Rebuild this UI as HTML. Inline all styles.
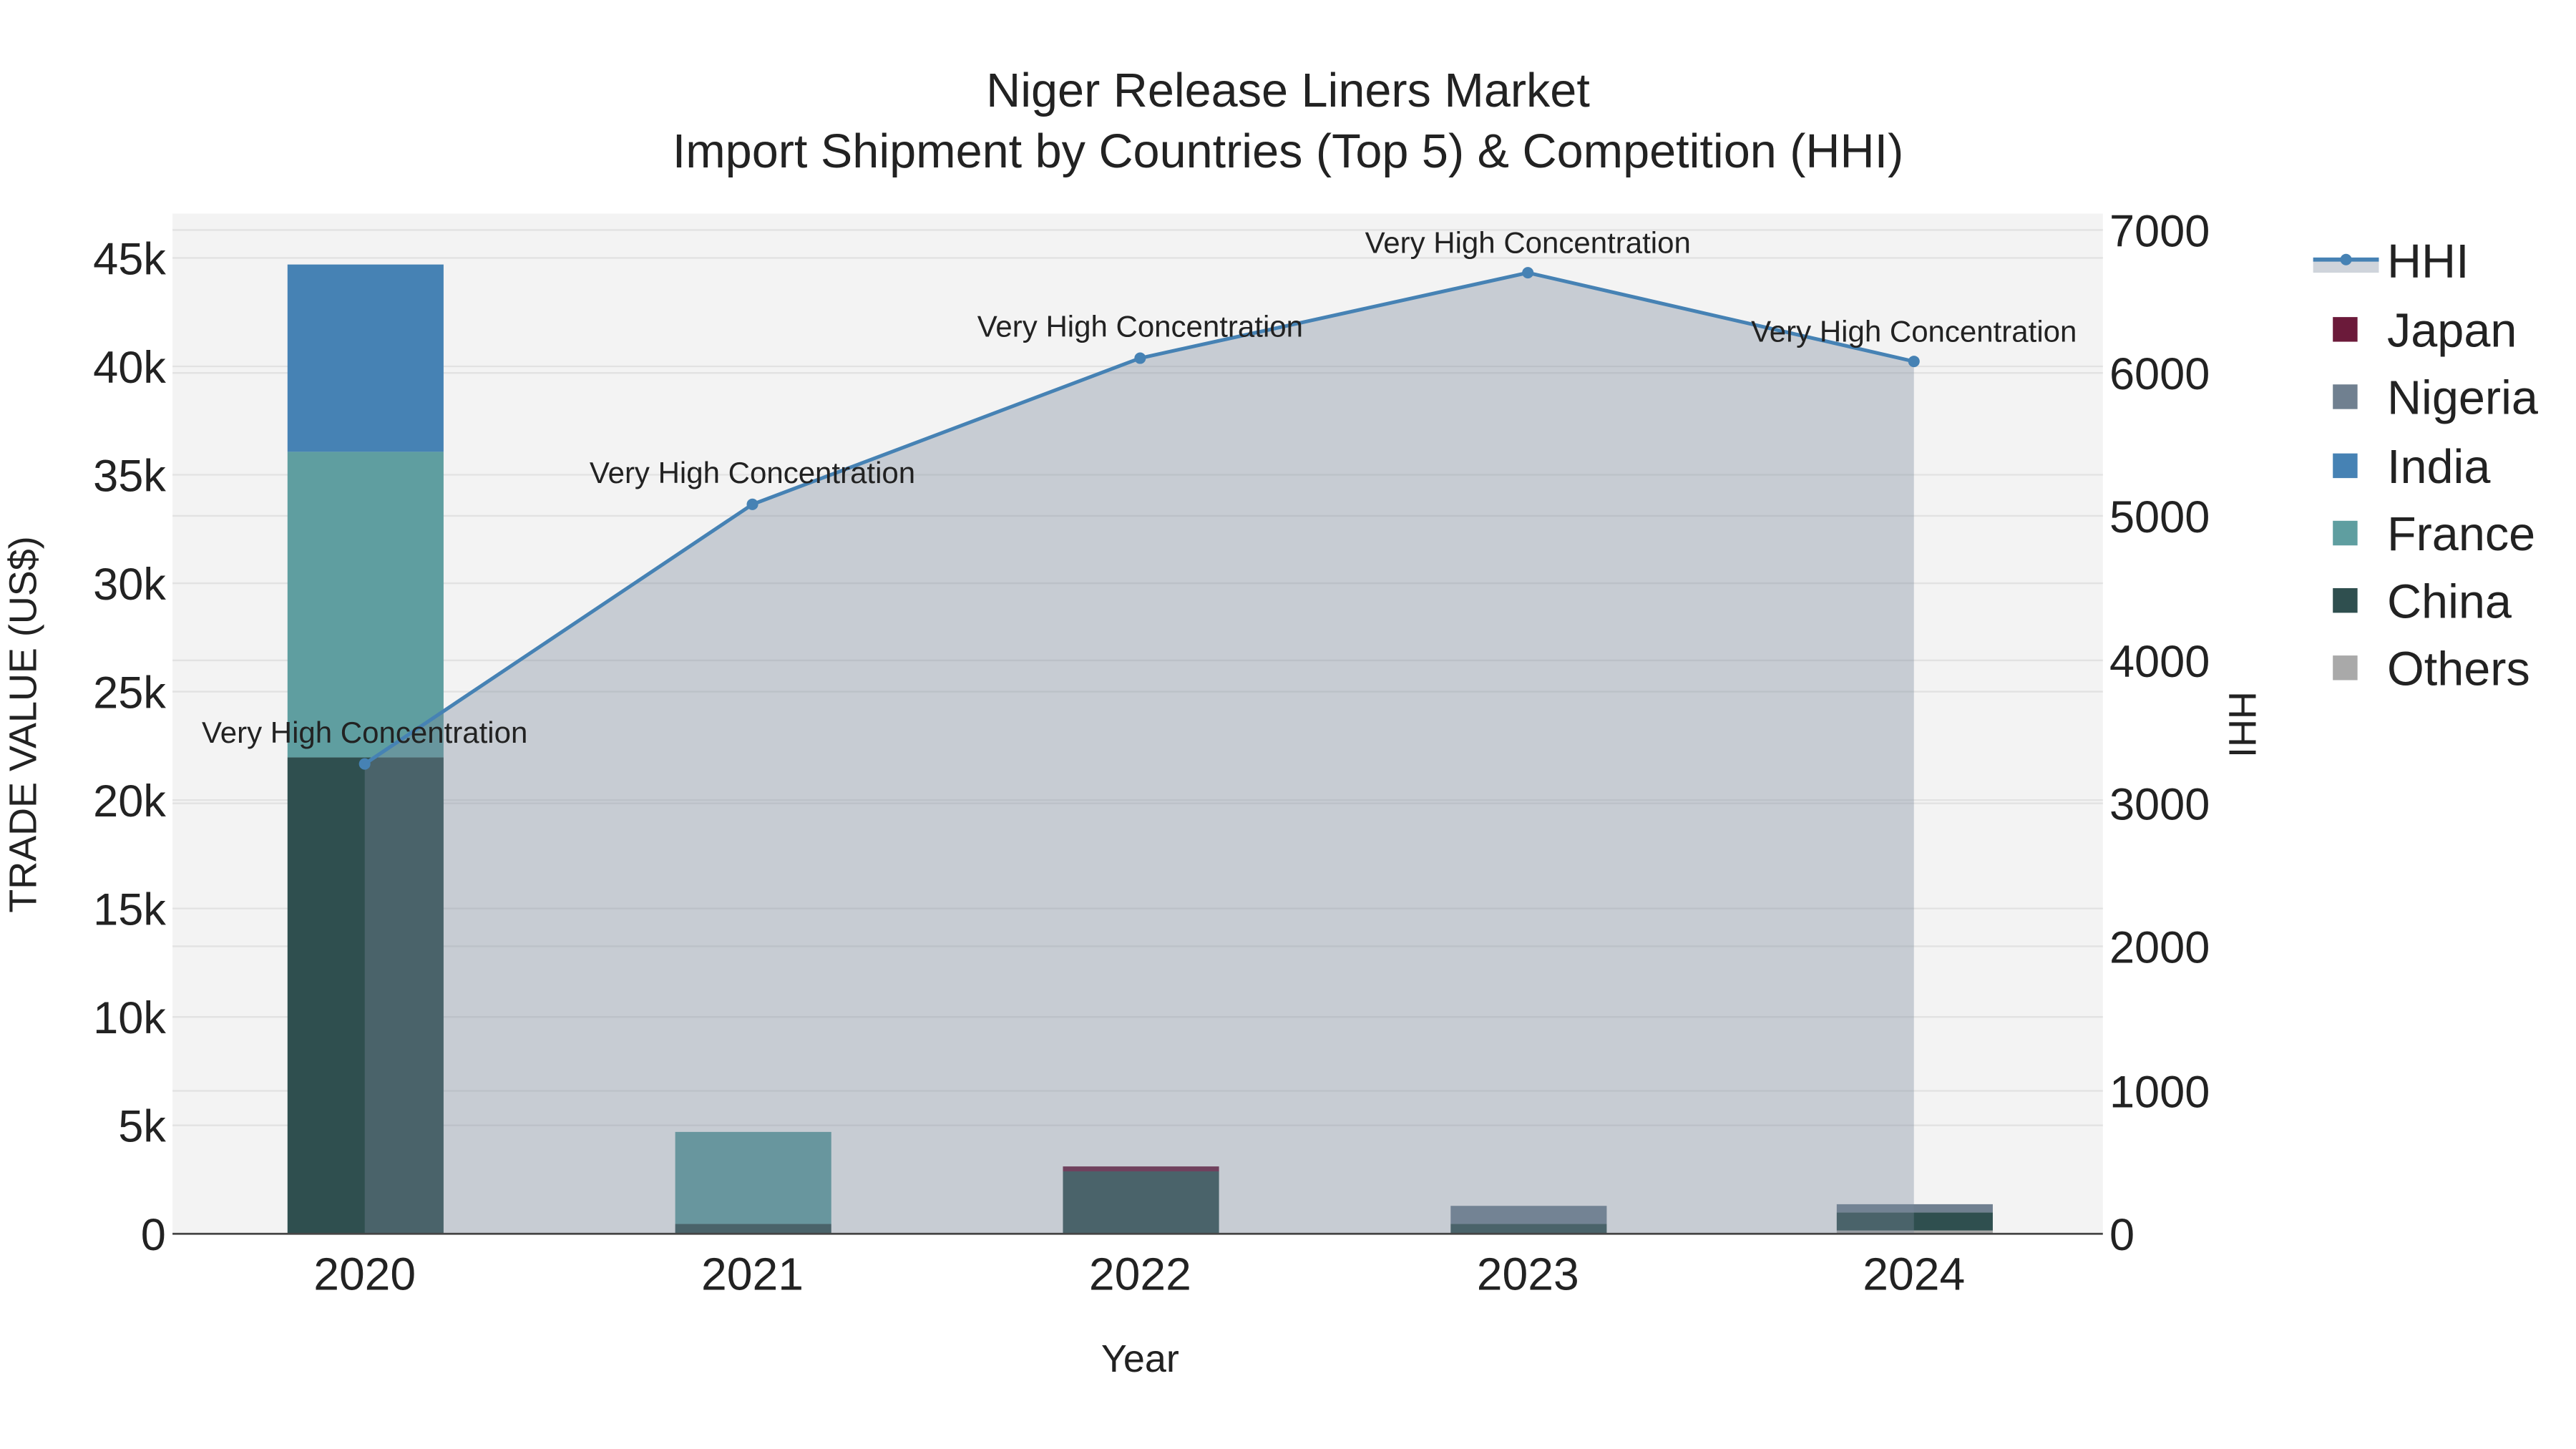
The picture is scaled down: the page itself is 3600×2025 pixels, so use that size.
<!DOCTYPE html>
<html><head><meta charset="utf-8"><style>
html,body{margin:0;padding:0;background:#fff;}
svg{display:block;}
text{font-family:"Liberation Sans",Arial,sans-serif;fill:#222;}
</style></head><body>
<svg width="3600" height="2025" viewBox="0 0 1568 882" preserveAspectRatio="none" xmlns="http://www.w3.org/2000/svg">
<rect x="0" y="0" width="1568" height="882" fill="#fff"/>
<rect x="105" y="130" width="1175" height="621" fill="#f3f3f3"/>
<g stroke="#e2e2e2" stroke-width="1">
<line x1="105" x2="1280" y1="685" y2="685"/><line x1="105" x2="1280" y1="619" y2="619"/>
<line x1="105" x2="1280" y1="553" y2="553"/><line x1="105" x2="1280" y1="487" y2="487"/>
<line x1="105" x2="1280" y1="421" y2="421"/><line x1="105" x2="1280" y1="355" y2="355"/>
<line x1="105" x2="1280" y1="289" y2="289"/><line x1="105" x2="1280" y1="223" y2="223"/>
<line x1="105" x2="1280" y1="157" y2="157"/>
<line x1="105" x2="1280" y1="664" y2="664"/><line x1="105" x2="1280" y1="576" y2="576"/>
<line x1="105" x2="1280" y1="489" y2="489"/><line x1="105" x2="1280" y1="402" y2="402"/>
<line x1="105" x2="1280" y1="314" y2="314"/><line x1="105" x2="1280" y1="227" y2="227"/>
<line x1="105" x2="1280" y1="140" y2="140"/>
</g>
<g>
<rect x="175" y="461" width="95" height="290" fill="#2F4F4F"/>
<rect x="175" y="275" width="95" height="186" fill="#5F9EA0"/>
<rect x="175" y="161" width="95" height="114" fill="#4682B4"/>
<rect x="411" y="745" width="95" height="6" fill="#2F4F4F"/>
<rect x="411" y="689" width="95" height="56" fill="#5F9EA0"/>
<rect x="647" y="713" width="95" height="38" fill="#2F4F4F"/>
<rect x="647" y="710" width="95" height="3" fill="#6B1A3A"/>
<rect x="883" y="745" width="95" height="6" fill="#2F4F4F"/>
<rect x="883" y="734" width="95" height="11" fill="#708090"/>
<rect x="1118" y="749" width="95" height="2" fill="#A9A9A9"/>
<rect x="1118" y="738" width="95" height="11" fill="#2F4F4F"/>
<rect x="1118" y="733" width="95" height="5" fill="#708090"/>
</g>
<polygon points="222,465 458,307 694,218 930,166 1165,220 1165,751 222,751" fill="rgba(123,137,156,0.36)"/>
<polyline points="222,465 458,307 694,218 930,166 1165,220" fill="none" stroke="#4682B4" stroke-width="2.2"/>
<g fill="#4682B4"><circle cx="222" cy="465" r="3.5"/><circle cx="458" cy="307" r="3.5"/><circle cx="694" cy="218" r="3.5"/><circle cx="930" cy="166" r="3.5"/><circle cx="1165" cy="220" r="3.5"/></g>
<line x1="105" x2="1280" y1="751" y2="751" stroke="#444" stroke-width="1.2"/>
<g font-size="18.3" text-anchor="middle">
<text x="222" y="452">Very High Concentration</text>
<text x="458" y="294">Very High Concentration</text>
<text x="694" y="205">Very High Concentration</text>
<text x="930" y="154">Very High Concentration</text>
<text x="1165" y="208">Very High Concentration</text>
</g>
<g font-size="27.5" text-anchor="end">
<text x="101" y="761">0</text><text x="101" y="695">5k</text><text x="101" y="629">10k</text>
<text x="101" y="563">15k</text><text x="101" y="497">20k</text><text x="101" y="431">25k</text>
<text x="101" y="365">30k</text><text x="101" y="299">35k</text><text x="101" y="233">40k</text>
<text x="101" y="167">45k</text>
</g>
<g font-size="27.5" text-anchor="start">
<text x="1284" y="761">0</text><text x="1284" y="674">1000</text><text x="1284" y="586">2000</text>
<text x="1284" y="499">3000</text><text x="1284" y="412">4000</text><text x="1284" y="324">5000</text>
<text x="1284" y="237">6000</text><text x="1284" y="150">7000</text>
</g>
<g font-size="28" text-anchor="middle">
<text x="222" y="785">2020</text><text x="458" y="785">2021</text><text x="694" y="785">2022</text>
<text x="930" y="785">2023</text><text x="1165" y="785">2024</text>
</g>
<text x="694" y="835" font-size="23.5" text-anchor="middle">Year</text>
<text transform="translate(22,441) rotate(-90)" font-size="23.5" text-anchor="middle">TRADE VALUE (US$)</text>
<text transform="translate(1357,441) rotate(90)" font-size="23.5" text-anchor="middle">HHI</text>
<text x="784" y="65" font-size="29" text-anchor="middle">Niger Release Liners Market</text>
<text x="784" y="102" font-size="29" text-anchor="middle">Import Shipment by Countries (Top 5) &amp; Competition (HHI)</text>
<rect x="1408" y="158" width="40" height="8" fill="rgba(123,137,156,0.36)"/>
<line x1="1408" x2="1448" y1="158" y2="158" stroke="#4682B4" stroke-width="2.5"/>
<circle cx="1428" cy="158" r="3.5" fill="#4682B4"/>
<g>
<rect x="1420" y="193" width="15" height="15" fill="#6B1A3A"/>
<rect x="1420" y="234" width="15" height="15" fill="#708090"/>
<rect x="1420" y="276" width="15" height="15" fill="#4682B4"/>
<rect x="1420" y="317" width="15" height="15" fill="#5F9EA0"/>
<rect x="1420" y="358" width="15" height="15" fill="#2F4F4F"/>
<rect x="1420" y="399" width="15" height="15" fill="#A9A9A9"/>
</g>
<g font-size="29">
<text x="1453" y="169">HHI</text><text x="1453" y="211">Japan</text><text x="1453" y="252">Nigeria</text>
<text x="1453" y="294">India</text><text x="1453" y="335">France</text><text x="1453" y="376">China</text>
<text x="1453" y="417">Others</text>
</g>
</svg>
</body></html>
